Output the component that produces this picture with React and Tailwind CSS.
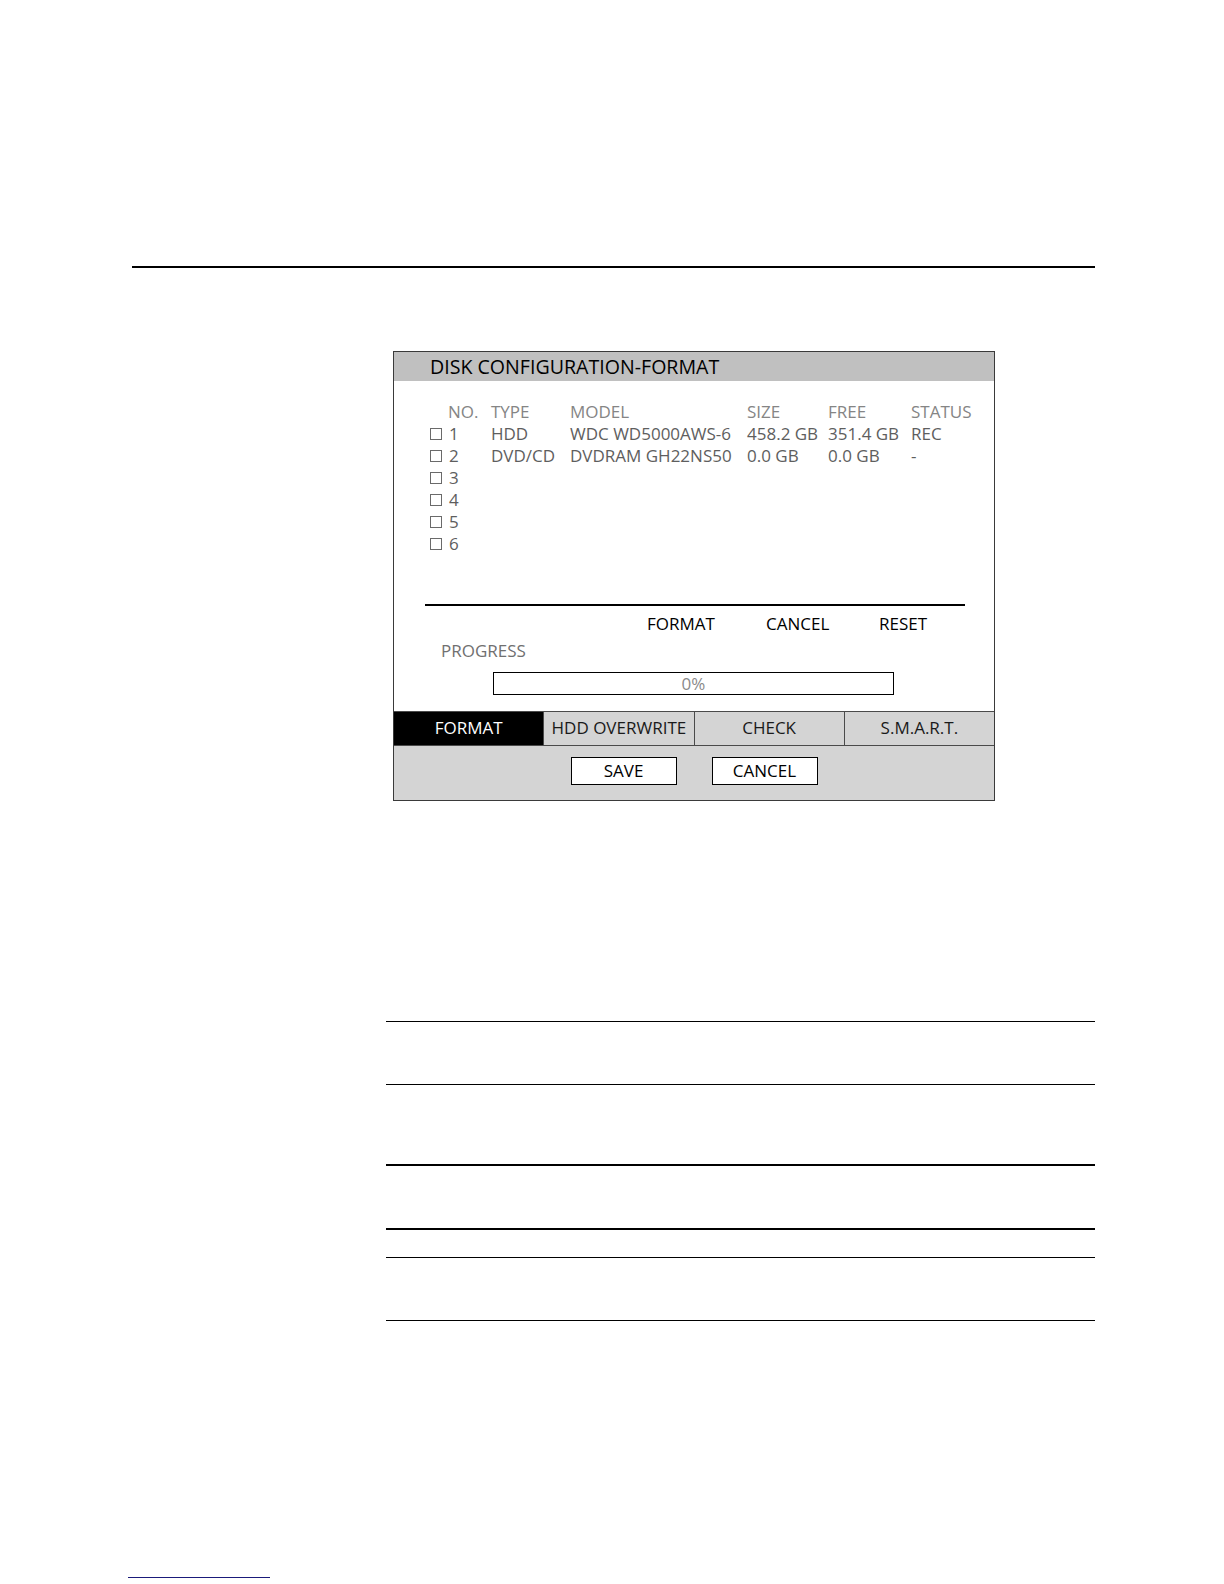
import React from 'react';

const FONT = { fontFamily: '"Open Sans", "Noto Sans", sans-serif' };

const disks = [
  { no: 1, type: 'HDD', model: 'WDC WD5000AWS-6', size: '458.2 GB', free: '351.4 GB', status: 'REC' },
  { no: 2, type: 'DVD/CD', model: 'DVDRAM GH22NS50', size: '0.0 GB', free: '0.0 GB', status: '-' },
  { no: 3 },
  { no: 4 },
  { no: 5 },
  { no: 6 },
];

const cols = 'grid grid-cols-[61px_79px_177px_81px_83px_1fr]';

const Row = ({ d }) => (
  <div className={`${cols} h-[22px] leading-[22px] text-[#5e5e5e]`}>
    <div className="flex items-center">
      <span className="w-[12px] h-[12px] border border-[#6a6a6a] mr-[7px]" />
      <span>{d.no}</span>
    </div>
    <div>{d.type}</div>
    <div>{d.model}</div>
    <div>{d.size}</div>
    <div>{d.free}</div>
    <div>{d.status}</div>
  </div>
);

const Tab = ({ label, active, last }) => (
  <div
    className={`flex-1 flex items-center justify-center ${last ? '' : 'border-r'} border-[#4a4a4a] ${
      active ? 'bg-black text-white' : 'bg-[#d4d4d4] text-[#1a1a1a]'
    }`}
  >
    {label}
  </div>
);

const App = () => {
  return (
    <div className="w-[1224px] h-[1584px] bg-white flex flex-col text-[17px]" style={FONT}>
      <div className="mt-[266px] ml-[132px] w-[963px] h-[1.5px] bg-black" />

      {/* Dialog */}
      <div className="mt-[83px] ml-[393px] w-[602px] h-[450px] border border-[#3a3a3a] flex flex-col">
        <div className="h-[29px] bg-[#c0c0c0] pl-[36px] text-[19.6px] leading-[29px] text-black">
          DISK CONFIGURATION-FORMAT
        </div>

        <div className="h-[330px] flex flex-col">
          <div className="pt-[20px] pl-[36px]">
            <div className={`${cols} h-[22px] leading-[22px] text-[#858585]`}>
              <div className="pl-[18px]">NO.</div>
              <div>TYPE</div>
              <div>MODEL</div>
              <div>SIZE</div>
              <div>FREE</div>
              <div>STATUS</div>
            </div>
            {disks.map((d) => (
              <Row key={d.no} d={d} />
            ))}
          </div>

          <div className="mt-[49px] ml-[31px] w-[540px] h-[2px] bg-black" />

          <div className="mt-[7px] pl-[253px] flex h-[22px] leading-[22px] text-black">
            <span className="w-[119px]">FORMAT</span>
            <span className="w-[113px]">CANCEL</span>
            <span>RESET</span>
          </div>

          <div className="mt-[5px] pl-[47px] h-[22px] leading-[22px] text-[#707070]">PROGRESS</div>

          <div className="mt-[10px] ml-[99px] w-[401px] h-[23px] border border-black flex items-center justify-center text-[#8a8a8a] leading-none">
            0%
          </div>
        </div>

        {/* Tabs */}
        <div className="h-[35px] flex border-y border-[#4a4a4a]">
          <Tab label="FORMAT" active />
          <Tab label="HDD OVERWRITE" />
          <Tab label="CHECK" />
          <Tab label="S.M.A.R.T." last />
        </div>

        <div className="flex-1 bg-[#d4d4d4] flex justify-center gap-[35px] pt-[11px]">
          <button className="w-[106px] h-[28px] bg-white border border-black text-black">SAVE</button>
          <button className="w-[106px] h-[28px] bg-white border border-black text-black">CANCEL</button>
        </div>
      </div>

      {/* Table rules below */}
      <div className="ml-[386px] w-[709px] flex flex-col">
        <div className="mt-[220px] h-px bg-black" />
        <div className="mt-[62px] h-px bg-black" />
        <div className="mt-[79px] h-[2px] bg-black" />
        <div className="mt-[62px] h-[2px] bg-black" />
        <div className="mt-[27px] h-px bg-black" />
        <div className="mt-[62px] h-px bg-black" />
      </div>

      <div className="mt-[256px] ml-[128px] w-[142px] h-px bg-[#1a1a7a]" />
    </div>
  );
};

export default App;
